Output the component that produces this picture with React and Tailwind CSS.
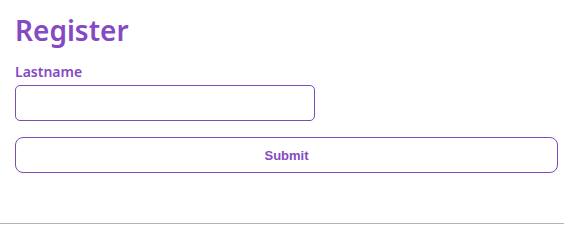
export default function App() {
  return (
    <div className="h-[224px] border-b border-[#b4b4b4] bg-white">
      <form className="pl-[15px] pt-[12px]" onSubmit={(e) => e.preventDefault()}>
        <h1 className="text-[28px] leading-[36px] font-semibold text-[#8549c4] font-['Noto_Sans',sans-serif]">
          Register
        </h1>
        <label
          htmlFor="lastname"
          className="block mt-[15px] text-[14px] leading-[18px] font-semibold text-[#8549c4] font-['Noto_Sans',sans-serif]"
        >
          Lastname
        </label>
        <input
          id="lastname"
          type="text"
          className="block mt-[4px] w-[300px] h-[36px] px-2 rounded-[5px] border border-[#7d4bb8] bg-white outline-none"
        />
        <button
          type="submit"
          className="block mt-[16px] w-[543px] h-[36px] pt-px rounded-[8px] border border-[#7d4bb8] bg-white text-[13px] font-bold text-[#8549c4] font-['Liberation_Sans',Arial,sans-serif]"
        >
          Submit
        </button>
      </form>
    </div>
  );
}
